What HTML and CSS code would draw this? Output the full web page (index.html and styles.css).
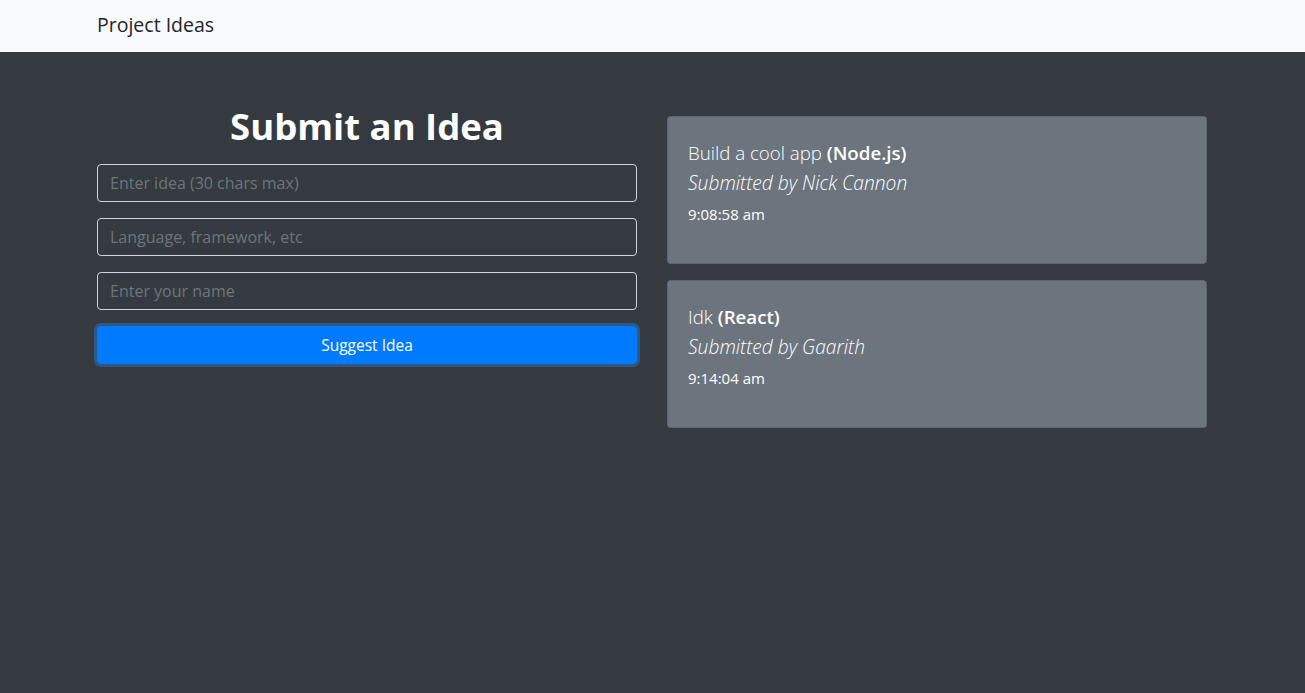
FILE: index.html
```html
<!DOCTYPE html>
<html lang="en">
<head>
<meta charset="utf-8">
<title>Project Ideas</title>
<link rel="stylesheet" href="styles.css">
</head>
<body>
<nav class="navbar">
  <div class="container">
    <a class="brand" href="#">Project Ideas</a>
  </div>
</nav>
<main class="container main">
  <div class="row">
    <section class="col col-form">
      <h1 class="title">Submit an Idea</h1>
      <form class="form">
        <input class="field" type="text" placeholder="Enter idea (30 chars max)">
        <input class="field" type="text" placeholder="Language, framework, etc">
        <input class="field" type="text" placeholder="Enter your name">
        <button class="btn" type="button">Suggest Idea</button>
      </form>
    </section>
    <section class="col col-ideas">
      <div class="card">
        <h5 class="card-title">Build a cool app <strong>(Node.js)</strong></h5>
        <p class="card-sub">Submitted by Nick Cannon</p>
        <p class="card-time">9:08:58 am</p>
      </div>
      <div class="card">
        <h5 class="card-title">Idk <strong>(React)</strong></h5>
        <p class="card-sub">Submitted by Gaarith</p>
        <p class="card-time">9:14:04 am</p>
      </div>
    </section>
  </div>
</main>
</body>
</html>
```

FILE: styles.css
```css
* { box-sizing: border-box; }
html, body { height: 100%; }
body {
  margin: 0;
  background: #343a40;
  font-family: "Open Sans", "Noto Sans", "Liberation Sans", sans-serif;
  font-size: 16px;
  color: #fff;
}
.container {
  max-width: 1140px;
  margin: 0 auto;
  padding: 0 15.5px 0 14.5px;
}
.navbar {
  background: #f8f9fa;
  height: 52px;
  display: flex;
  align-items: center;
}
.navbar .container { width: 100%; }
.brand {
  color: #212529;
  text-decoration: none;
  font-size: 19.5px;
  line-height: 30px;
  font-weight: 400;
  display: inline-block;
  margin-top: -2px;
}
.main { padding-top: 48px; }
.row {
  display: grid;
  grid-template-columns: 1fr 1fr;
  column-gap: 30px;
}
.title {
  margin: 0 0 12px;
  text-align: center;
  font-size: 36.5px;
  line-height: 52px;
  font-weight: 700;
  color: #fff;
}
.form {
  display: flex;
  flex-direction: column;
  gap: 16px;
}
.field {
  height: 38px;
  width: 100%;
  border: 1px solid #ced4da;
  border-radius: 4px;
  background: transparent;
  color: #fff;
  font-family: inherit;
  font-size: 16px;
  padding: 6px 12px;
  outline: none;
}
.field::placeholder { color: #6c757d; }
.btn {
  height: 38px;
  width: 100%;
  border: 1px solid #007bff;
  border-radius: 4px;
  background: #007bff;
  color: #fff;
  font-family: inherit;
  font-size: 15.5px;
  box-shadow: 0 0 0 3px rgba(38, 143, 255, 0.35);
}
.card {
  margin-top: 16px;
  background: #6c757d;
  border: 1px solid rgba(0, 0, 0, 0.125);
  border-radius: 4px;
  padding: 24px 20px 38px;
}
.card-title {
  margin: 0 0 6px;
  font-size: 18.7px;
  line-height: 24px;
  font-weight: 300;
}
.card-title strong { font-weight: 600; }
.card-sub {
  margin: 0 0 8px;
  font-size: 19.2px;
  line-height: 24px;
  font-style: italic;
  font-weight: 300;
}
.card-time {
  margin: 0;
  font-size: 15px;
  line-height: 22px;
  font-weight: 500;
}
```
